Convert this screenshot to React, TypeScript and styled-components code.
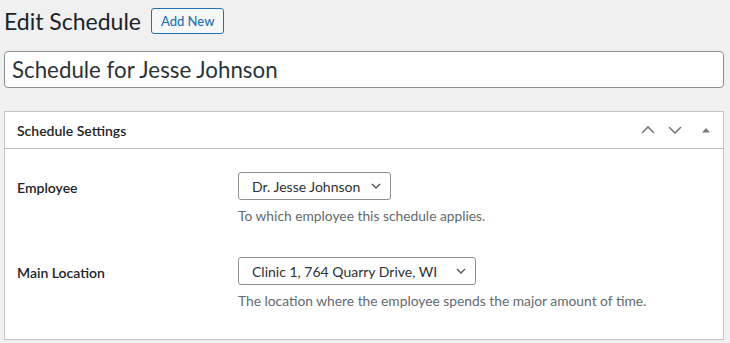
import styled, { createGlobalStyle } from 'styled-components';

const GlobalStyle = createGlobalStyle`
  html, body {
    margin: 0;
    padding: 0;
    background: #f0f0f1;
    font-family: Lato, "Noto Sans", sans-serif;
    color: #1d2327;
  }
`;

const Wrap = styled.div`
  padding: 6px 6px 0 4px;
`;

const TitleRow = styled.div`
  display: flex;
  align-items: center;
  gap: 10px;
  height: 30px;
`;

const Heading = styled.h1`
  margin: 0;
  font-size: 23px;
  font-weight: 400;
  line-height: 30px;
  color: #1d2327;
`;

const AddButton = styled.button`
  height: 26px;
  padding: 0 9px;
  border: 1px solid #2271b1;
  border-radius: 3px;
  background: #f6f7f7;
  color: #2271b1;
  font-family: inherit;
  font-size: 13px;
  font-weight: 500;
`;

const TitleInput = styled.input`
  display: block;
  box-sizing: border-box;
  width: 100%;
  height: 37px;
  margin-top: 15px;
  padding: 0 7px;
  border: 1px solid #8c8f94;
  border-radius: 4px;
  background: #fff;
  font-family: inherit;
  font-size: 22.3px;
  color: #2c3338;
  outline: none;
`;

const Postbox = styled.section`
  margin-top: 23px;
  border: 1px solid #c3c4c7;
  background: #fff;
`;

const PostboxHeader = styled.header`
  display: flex;
  align-items: center;
  justify-content: space-between;
  height: 36px;
  padding: 0 12px 0 12px;
  border-bottom: 1px solid #c3c4c7;
`;

const PostboxTitle = styled.h2`
  margin: 0;
  font-size: 14px;
  font-weight: 600;
`;

const Handles = styled.div`
  display: flex;
  align-items: center;
  gap: 13px;
  color: #787c82;
`;

const Inside = styled.div`
  padding: 23px 12px 29px;
  display: grid;
  row-gap: 32px;
`;

const Row = styled.div`
  display: grid;
  grid-template-columns: 221px 1fr;
`;

const Label = styled.div`
  padding-top: 2px;
  font-size: 14px;
  font-weight: 600;
  line-height: 28px;
`;

const Field = styled.div`
  display: flex;
  flex-direction: column;
  align-items: flex-start;
  gap: 7px;
`;

const Select = styled.div<{ $width: number }>`
  box-sizing: border-box;
  width: ${(p) => p.$width}px;
  height: 28px;
  display: flex;
  align-items: center;
  justify-content: space-between;
  padding: 0 8px 0 13px;
  border: 1px solid #8c8f94;
  border-radius: 3px;
  font-size: 14px;
  color: #2c3338;
`;

const Description = styled.p`
  margin: 0;
  font-size: 13.8px;
  line-height: 18px;
  color: #646970;
`;

const Chevron = ({ up = false }: { up?: boolean }) => (
  <svg width="14" height="14" viewBox="0 0 14 14" fill="none" stroke="currentColor" strokeWidth="1.6">
    <polyline points={up ? '1,10 7,4 13,10' : '1,4 7,10 13,4'} />
  </svg>
);

const SelectChevron = () => (
  <svg width="12" height="12" viewBox="0 0 12 12" fill="none" stroke="#50575e" strokeWidth="1.4">
    <polyline points="2,4 6,8 10,4" />
  </svg>
);

const fields = [
  {
    label: 'Employee',
    value: 'Dr. Jesse Johnson',
    width: 153,
    help: 'To which employee this schedule applies.',
  },
  {
    label: 'Main Location',
    value: 'Clinic 1, 764 Quarry Drive, WI',
    width: 238,
    help: 'The location where the employee spends the major amount of time.',
  },
];

export default function App() {
  return (
    <>
      <GlobalStyle />
      <Wrap>
        <TitleRow>
          <Heading>Edit Schedule</Heading>
          <AddButton>Add New</AddButton>
        </TitleRow>
        <TitleInput defaultValue="Schedule for Jesse Johnson" />
        <Postbox>
          <PostboxHeader>
            <PostboxTitle>Schedule Settings</PostboxTitle>
            <Handles>
              <Chevron up />
              <Chevron />
              <svg width="16" height="14" viewBox="0 0 16 14" fill="currentColor">
                <polygon points="7,9.5 11,5 15,9.5" />
              </svg>
            </Handles>
          </PostboxHeader>
          <Inside>
            {fields.map((f) => (
              <Row key={f.label}>
                <Label>{f.label}</Label>
                <Field>
                  <Select $width={f.width}>
                    <span>{f.value}</span>
                    <SelectChevron />
                  </Select>
                  <Description>{f.help}</Description>
                </Field>
              </Row>
            ))}
          </Inside>
        </Postbox>
      </Wrap>
    </>
  );
}
